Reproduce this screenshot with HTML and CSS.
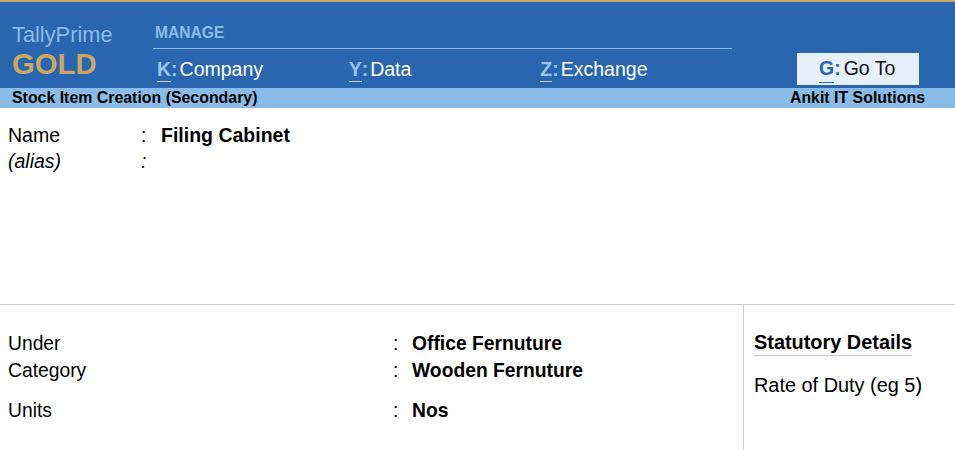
FILE: index.html
```html
<!DOCTYPE html>
<html>
<head>
<meta charset="utf-8">
<link rel="stylesheet" href="styles.css">
</head>
<body>
<header class="hdr">
  <div class="brand">
    <div class="tp">TallyPrime</div>
    <div class="gold">GOLD</div>
  </div>
  <div class="nav">
    <div class="manage">MANAGE</div>
    <div class="menu">
      <div class="item"><span class="k">K</span><span class="c">:</span>Company</div>
      <div class="item"><span class="k">Y</span><span class="c">:</span>Data</div>
      <div class="item"><span class="k">Z</span><span class="c">:</span>Exchange</div>
    </div>
  </div>
  <div class="goto"><span class="gk">G</span><span class="gc">:</span>Go To</div>
</header>
<div class="titlebar">
  <span>Stock Item Creation (Secondary)</span>
  <span>Ankit IT Solutions</span>
</div>
<section class="top">
  <div class="row name-row">
    <span class="lbl">Name</span><span class="col">:</span><span class="val">Filing Cabinet</span>
  </div>
  <div class="row">
    <span class="lbl alias">(alias)</span><span class="col alias">:</span><span class="val"></span>
  </div>
</section>
<section class="bottom">
  <div class="left">
    <div class="row2"><span class="lbl2">Under</span><span class="col2">:</span><span class="val">Office Fernuture</span></div>
    <div class="row2"><span class="lbl2">Category</span><span class="col2">:</span><span class="val">Wooden Fernuture</span></div>
    <div class="row2 units"><span class="lbl2">Units</span><span class="col2">:</span><span class="val">Nos</span></div>
  </div>
  <div class="right">
    <div class="stat">Statutory Details</div>
    <div class="rate">Rate of Duty (eg 5)</div>
  </div>
</section>
</body>
</html>
```
FILE: styles.css
```css
* { box-sizing: border-box; }
html, body { margin: 0; padding: 0; }
body {
  font-family: "Liberation Sans", Arial, sans-serif;
  color: #000;
  background: #fff;
  width: 955px;
  height: 450px;
  overflow: hidden;
}
.hdr {
  display: flex;
  height: 88px;
  background: #2a66b0;
  border-top: 2px solid #c6a862;
}
.brand {
  width: 153px;
  padding-left: 12px;
  padding-top: 21px;
}
.tp {
  font-size: 21.8px;
  line-height: 24px;
  color: #8cbbe9;
}
.gold {
  margin-top: 2px;
  font-size: 29.3px;
  line-height: 30px;
  font-weight: bold;
  color: #c8a862;
}
.nav {
  width: 579px;
  padding-top: 21px;
}
.manage {
  font-size: 15.6px;
  line-height: 19px;
  font-weight: bold;
  color: #8dbbe8;
  padding-left: 2px;
  padding-bottom: 6px;
  border-bottom: 1px solid #8dbbe8;
}
.menu {
  display: flex;
  margin-top: 9px;
  padding-left: 4px;
}
.item {
  width: 192.5px;
  font-size: 19.5px;
  line-height: 22px;
  color: #fff;
}
.k {
  display: inline-block;
  font-weight: bold;
  color: #9cc4ea;
  border-bottom: 1px solid #c5d8ee;
  line-height: 23px;
}
.c {
  font-weight: bold;
  color: #9cc4ea;
  margin-right: 2px;
}
.goto {
  margin-left: auto;
  margin-right: 36px;
  margin-top: 51px;
  width: 122px;
  height: 32px;
  background: #e6f0fb;
  padding-left: 22px;
  font-size: 19.5px;
  line-height: 31px;
  color: #111;
}
.gk {
  display: inline-block;
  font-weight: bold;
  color: #2a66b0;
  border-bottom: 1px solid #2a66b0;
  line-height: 28px;
}
.gc {
  font-weight: bold;
  color: #2a66b0;
  margin-right: 3px;
}
.titlebar {
  display: flex;
  justify-content: space-between;
  height: 20px;
  background: #89bce6;
  padding: 0 30px 0 12px;
  font-size: 15.9px;
  line-height: 20px;
  font-weight: bold;
}
.top {
  height: 197px;
  border-bottom: 1px solid #cacaca;
  padding-top: 14px;
  padding-left: 8px;
}
.row {
  display: flex;
  font-size: 19.5px;
  line-height: 26px;
}
.lbl { width: 133px; }
.col { width: 20px; }
.val { font-weight: bold; }
.alias { font-style: italic; }
.bottom {
  display: flex;
  height: 145px;
}
.left {
  width: 744px;
  border-right: 1px solid #cacaca;
  padding-top: 25px;
  padding-left: 8px;
}
.row2 {
  display: flex;
  font-size: 19.3px;
  line-height: 27px;
}
.row2.units { margin-top: 13px; }
.lbl2 { width: 385px; }
.col2 { width: 19px; }
.right {
  padding-left: 10px;
  padding-top: 26px;
}
.stat {
  display: inline-block;
  font-size: 19.9px;
  line-height: 22px;
  font-weight: bold;
  padding-bottom: 2px;
  border-bottom: 1px solid #cacaca;
}
.rate {
  margin-top: 18px;
  font-size: 19.9px;
  line-height: 22px;
}
```
